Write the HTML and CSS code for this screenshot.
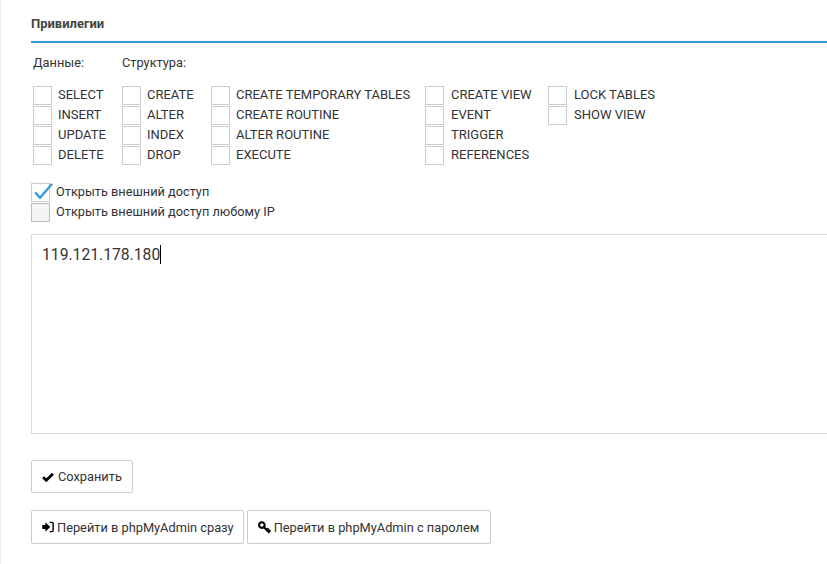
FILE: index.html
```html
<!DOCTYPE html>
<html lang="ru">
<head>
<meta charset="utf-8">
<title>Привилегии</title>
<link rel="stylesheet" href="styles.css">
</head>
<body>
<main class="panel">
  <h2 class="title">Привилегии</h2>
  <div class="privs">
    <div class="col">
      <div class="head">Данные:</div>
      <div class="row"><span class="box"></span><span>SELECT</span></div>
      <div class="row"><span class="box"></span><span>INSERT</span></div>
      <div class="row"><span class="box"></span><span>UPDATE</span></div>
      <div class="row"><span class="box"></span><span>DELETE</span></div>
    </div>
    <div class="col">
      <div class="head">Структура:</div>
      <div class="row"><span class="box"></span><span>CREATE</span></div>
      <div class="row"><span class="box"></span><span>ALTER</span></div>
      <div class="row"><span class="box"></span><span>INDEX</span></div>
      <div class="row"><span class="box"></span><span>DROP</span></div>
    </div>
    <div class="col">
      <div class="head"></div>
      <div class="row"><span class="box"></span><span>CREATE TEMPORARY TABLES</span></div>
      <div class="row"><span class="box"></span><span>CREATE ROUTINE</span></div>
      <div class="row"><span class="box"></span><span>ALTER ROUTINE</span></div>
      <div class="row"><span class="box"></span><span>EXECUTE</span></div>
    </div>
    <div class="col col-far">
      <div class="head"></div>
      <div class="row"><span class="box"></span><span>CREATE VIEW</span></div>
      <div class="row"><span class="box"></span><span>EVENT</span></div>
      <div class="row"><span class="box"></span><span>TRIGGER</span></div>
      <div class="row"><span class="box"></span><span>REFERENCES</span></div>
    </div>
    <div class="col col-far">
      <div class="head"></div>
      <div class="row"><span class="box"></span><span>LOCK TABLES</span></div>
      <div class="row"><span class="box"></span><span>SHOW VIEW</span></div>
    </div>
  </div>
  <div class="access">
    <div class="row">
      <span class="box box-checked">
        <svg class="tick" viewBox="0 0 21 20" width="21" height="20"><path d="M3.3 10.5 L8 15.8 L20 2" fill="none" stroke="#3498db" stroke-width="2.4"/></svg>
      </span>
      <span>Открыть внешний доступ</span>
    </div>
    <div class="row">
      <span class="box box-off"></span>
      <span>Открыть внешний доступ любому IP</span>
    </div>
  </div>
  <div class="ips"><span class="ips-text">119.121.178.180</span></div>
  <div class="actions">
    <a class="btn btn-save">
      <svg class="ico" viewBox="0 0 14 14" width="12" height="12"><path d="M1.3 7.2 L5 10.8 L12.7 3.1" fill="none" stroke="#000" stroke-width="3.2"/></svg>
      <span>Сохранить</span>
    </a>
  </div>
  <div class="actions">
    <a class="btn btn-pma">
      <svg class="ico" viewBox="0 0 14 14" width="12" height="12"><path d="M0.3 4.6 H4 V1.6 L9.6 7 L4 12.4 V9.4 H0.3 Z" fill="#000"/><path d="M9 1.6 H11.5 Q13 1.6 13 3.1 V10.9 Q13 12.4 11.5 12.4 H9" fill="none" stroke="#000" stroke-width="1.7"/></svg>
      <span>Перейти в phpMyAdmin сразу</span>
    </a>
    <a class="btn btn-pma">
      <svg class="ico" viewBox="0 0 14 14" width="13" height="13"><circle cx="4.2" cy="4.4" r="3" fill="none" stroke="#000" stroke-width="2.2"/><path d="M6.2 6.4 L12.4 12.6 M9.4 9.6 L11.4 7.8 M11.4 11.6 L13.4 9.8" fill="none" stroke="#000" stroke-width="2.2"/></svg>
      <span>Перейти в phpMyAdmin с паролем</span>
    </a>
  </div>
</main>
</body>
</html>
```
FILE: styles.css
```css
html, body {
  margin: 0;
  padding: 0;
  height: 100%;
  overflow: hidden;
  background: #fff;
}
body {
  font-family: Roboto, "Liberation Sans", sans-serif;
  font-size: 13px;
  color: #333;
  border-left: 1px solid #e8edf7;
  box-sizing: border-box;
}
.panel {
  padding: 0 0 0 30px;
}
.title {
  margin: 0;
  padding: 16px 0 10px;
  height: 15px;
  line-height: 15px;
  font-size: 13px;
  font-weight: 700;
  color: #444;
  border-bottom: 2px solid #3498db;
}
.privs {
  display: grid;
  grid-template-columns: 89px 89px 214px 123px auto;
  padding: 10px 0 0 2px;
}
.head {
  height: 20px;
  line-height: 20px;
  margin-bottom: 12px;
  font-size: 12.8px;
}
.row {
  display: flex;
  align-items: center;
  height: 20px;
  line-height: 20px;
  white-space: nowrap;
}
.box {
  flex: none;
  width: 19px;
  height: 19px;
  box-sizing: border-box;
  border: 1px solid #ccc;
  margin-right: 6px;
  background: #fff;
  position: relative;
}
.col-far .box {
  margin-right: 7px;
}
.access {
  padding-top: 17px;
  font-size: 12.75px;
}
.box-off {
  background: #f4f4f4;
  border-color: #bbb;
}
.tick {
  position: absolute;
  left: 0;
  top: -2px;
}
.ips {
  margin-top: 12px;
  height: 200px;
  box-sizing: border-box;
  border: 1px solid #ddd;
  border-right: 0;
  padding: 10px 10px;
  font-size: 15.7px;
  line-height: 20px;
  color: #333;
}
.ips-text {
  border-right: 1px solid #000;
  display: inline-block;
  height: 19px;
  line-height: 19px;
}
.actions {
  display: flex;
  gap: 3px;
  margin-top: 26px;
  font-size: 12.8px;
}
.actions + .actions {
  margin-top: 17px;
}
.btn {
  display: flex;
  align-items: center;
  gap: 3px;
  box-sizing: border-box;
  height: 34px;
  padding: 0 10px;
  border: 1px solid #ccc;
  border-radius: 2px;
  background: #fff;
  color: #333;
}
.btn-pma:first-child {
  padding-right: 9px;
}
.btn-pma:last-child {
  padding-right: 11px;
}
.btn-save {
  height: 33px;
  gap: 4px;
}
.ico {
  flex: none;
}
```
